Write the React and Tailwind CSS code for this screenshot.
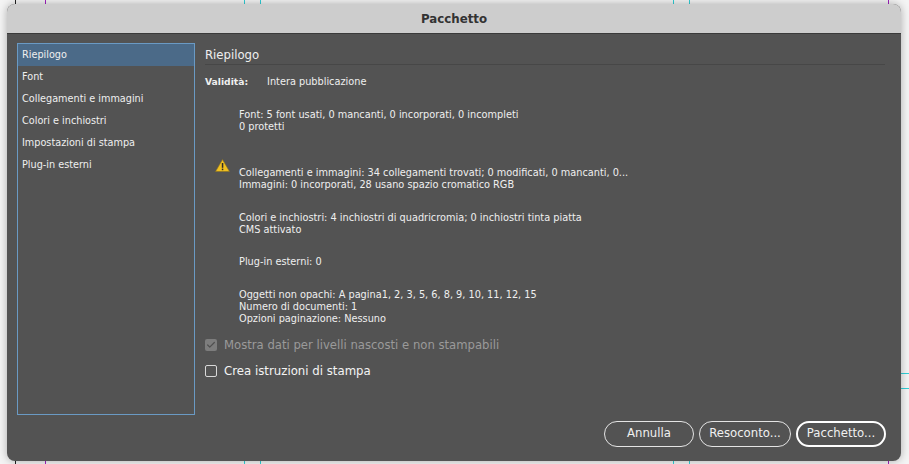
import React from 'react';
import { Check } from 'lucide-react';

const navItems = ['Riepilogo', 'Font', 'Collegamenti e immagini', 'Colori e inchiostri', 'Impostazioni di stampa', 'Plug-in esterni'];

// guide lines of the document behind the dialog
const vGuides = [
    { x: 'left-[15px]', c: 'bg-[#222222]' },
    { x: 'left-[45px]', c: 'bg-[#a020c0]' },
    { x: 'left-[244px]', c: 'bg-[#30d0d8]' },
    { x: 'left-[260px]', c: 'bg-[#30d0d8]' },
    { x: 'left-[673px]', c: 'bg-[#30d0d8]' },
    { x: 'left-[689px]', c: 'bg-[#30d0d8]' },
    { x: 'left-[888px]', c: 'bg-[#a020c0]' },
];

const Warning = () => (
    <svg width="15" height="13" viewBox="0 0 15 13" className="absolute left-[-24px] top-[-8px]">
        <path d="M7.5 0.5 L14.5 12.5 L0.5 12.5 Z" fill="#f0c020" stroke="#8a7020" strokeWidth="0.6" strokeLinejoin="round" />
        <rect x="6.8" y="4" width="1.5" height="4.8" fill="#2a2a2a" />
        <rect x="6.8" y="9.6" width="1.5" height="1.6" fill="#2a2a2a" />
    </svg>
);

const Btn = ({ label, w, primary }) => (
    <div className={`h-[26px] rounded-full flex items-center justify-center text-[11.7px] text-[#f0f0f0] ${w} ${primary ? 'border-2 border-white' : 'border border-[#e4e4e4]'}`}>
        {label}
    </div>
);

export default function App() {
    return (
        <div className="relative w-[909px] h-[464px] overflow-hidden bg-[#f4f4f4] font-['DejaVu_Sans',sans-serif]">
            {vGuides.map((g, i) => (
                <div key={i} className={`absolute top-0 bottom-0 w-px ${g.x} ${g.c}`} />
            ))}
            <div className="absolute left-[901px] right-0 top-[373px] h-px bg-[#30d0d8]" />
            <div className="absolute left-[901px] right-0 top-[388px] h-px bg-[#30d0d8]" />

            <div className="absolute left-[7px] top-[4px] w-[894px] h-[457px] rounded-[8px] overflow-hidden flex flex-col shadow-[0_0_8px_rgba(0,0,0,0.3)] bg-[#535353]">
                <div className="h-[30px] shrink-0 pt-[2px] bg-[#cdcdcd] border-b border-[#3a3a3a] flex items-center justify-center text-[11.8px] font-bold text-[#333333]">
                    Pacchetto
                </div>
                <div className="flex-1 relative flex pl-[10px] pr-[16px] pt-[9px]">
                    <div className="w-[178px] h-[372px] border border-[#6a9ac4] shrink-0">
                        {navItems.map((item, i) => (
                            <div key={item} className={`h-[22px] pl-[4px] flex items-start pt-[5px] text-[9.7px] leading-[12px] text-[#efefef] ${i === 0 ? 'bg-[#4b6a88]' : ''}`}>
                                {item}
                            </div>
                        ))}
                    </div>
                    <div className="flex-1 ml-[10px] text-[9.75px] leading-[12px] text-[#efefef]">
                        <div className="h-[22px] pt-[2px] border-b border-[#474747] flex items-center text-[11.7px] font-medium">Riepilogo</div>
                        <div className="flex mt-[11px]">
                            <span className="w-[62px] font-bold text-[9.2px]">Validità:</span>
                            <span>Intera pubblicazione</span>
                        </div>
                        <div className="ml-[34px] mt-[21px] flex flex-col">
                            <div>Font: 5 font usati, 0 mancanti, 0 incorporati, 0 incompleti<br />0 protetti</div>
                            <div className="relative mt-[34px]">
                                <Warning />
                                Collegamenti e immagini: 34 collegamenti trovati; 0 modificati, 0 mancanti, 0...<br />Immagini: 0 incorporati, 28 usano spazio cromatico RGB
                            </div>
                            <div className="mt-[21px]">Colori e inchiostri: 4 inchiostri di quadricromia; 0 inchiostri tinta piatta<br />CMS attivato</div>
                            <div className="mt-[20px]">Plug-in esterni: 0</div>
                            <div className="mt-[21px]">Oggetti non opachi: A pagina1, 2, 3, 5, 6, 8, 9, 10, 11, 12, 15<br />Numero di documenti: 1<br />Opzioni paginazione: Nessuno</div>
                        </div>
                        <div className="flex items-center gap-[7px] mt-[14px] text-[11.65px] text-[#9a9a9a]">
                            <span className="w-[12px] h-[12px] rounded-[2px] bg-[#7d7d7d] flex items-center justify-center">
                                <Check size={10} strokeWidth={3} className="text-[#505050]" />
                            </span>
                            Mostra dati per livelli nascosti e non stampabili
                        </div>
                        <div className="flex items-center gap-[7px] mt-[14px] text-[11.75px] text-[#f4f4f4]">
                            <span className="w-[12px] h-[12px] rounded-[2px] border border-[#d8d8d8]" />
                            Crea istruzioni di stampa
                        </div>
                    </div>
                    <div className="absolute right-[15px] bottom-[14px] flex gap-[5px]">
                        <Btn label="Annulla" w="w-[90px]" />
                        <Btn label="Resoconto..." w="w-[92px]" />
                        <Btn label="Pacchetto..." w="w-[90px]" primary />
                    </div>
                </div>
            </div>
        </div>
    );
}
